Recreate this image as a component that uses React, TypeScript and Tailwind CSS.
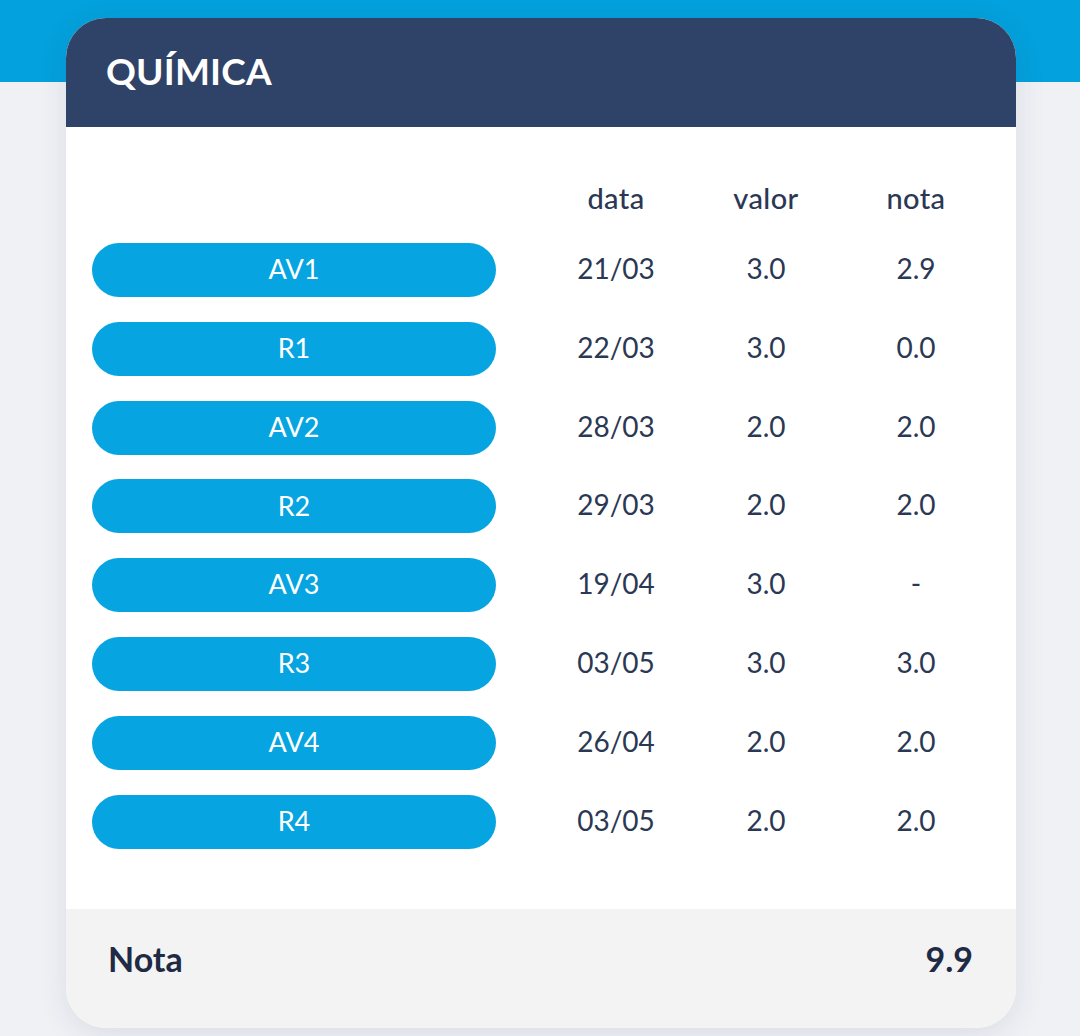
import React from "react";

const rows = [
  ["AV1", "21/03", "3.0", "2.9"],
  ["R1", "22/03", "3.0", "0.0"],
  ["AV2", "28/03", "2.0", "2.0"],
  ["R2", "29/03", "2.0", "2.0"],
  ["AV3", "19/04", "3.0", "-"],
  ["R3", "03/05", "3.0", "3.0"],
  ["AV4", "26/04", "2.0", "2.0"],
  ["R4", "03/05", "2.0", "2.0"],
];

export default function App() {
  return (
    <div
      className="w-[1080px] h-[1036px] overflow-hidden bg-[linear-gradient(to_bottom,#03a1dd_82px,#eff1f5_82px)] pt-[18px] pl-[66px]"
      style={{ fontFamily: "Lato, 'Open Sans', sans-serif" }}
    >
      <div className="w-[950px] rounded-[40px] overflow-hidden bg-white shadow-[0_6px_30px_rgba(40,50,80,0.10)]">
        <div className="h-[109px] bg-[#2f4368] flex items-center pl-[40px] pb-[4px]">
          <span className="text-white font-bold text-[37px] tracking-[0.2px]">QUÍMICA</span>
        </div>
        <div className="pt-[49px] pb-[60px] pl-[26px] text-[#2b3854]">
          <div className="grid grid-cols-[449px_150px_150px_150px] h-[40px] items-center text-[29px] font-medium tracking-[0.4px] pb-[6px]">
            <div />
            <div className="text-center">data</div>
            <div className="text-center">valor</div>
            <div className="text-center">nota</div>
          </div>
          <div className="mt-[27px] flex flex-col gap-[24.8px]">
            {rows.map((r) => (
              <div key={r[0]} className="grid grid-cols-[449px_150px_150px_150px] items-center text-[28px]">
                <div className="w-[404px] h-[54px] rounded-full bg-[#06a4e0] flex items-center justify-center text-white text-[27px] pb-[1px]">
                  {r[0]}
                </div>
                <div className="text-center pb-[4px]">{r[1]}</div>
                <div className="text-center pb-[4px]">{r[2]}</div>
                <div className="text-center pb-[4px]">{r[3]}</div>
              </div>
            ))}
          </div>
        </div>
        <div className="h-[119px] bg-[#f3f3f4] flex items-center justify-between pl-[42px] pr-[43px] pb-[20px] text-[#1f2a44] font-bold text-[34px]">
          <span>Nota</span>
          <span>9.9</span>
        </div>
      </div>
    </div>
  );
}
